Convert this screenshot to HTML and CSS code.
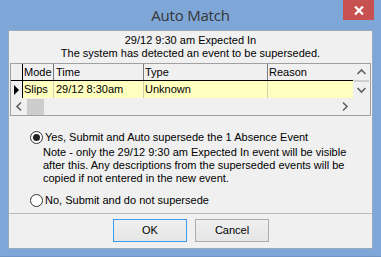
FILE: index.html
```html
<!DOCTYPE html>
<html>
<head>
<meta charset="utf-8">
<link rel="stylesheet" href="styles.css">
</head>
<body>
<div class="window">
  <div class="titlebar">
    <div class="spacer"></div>
    <div class="title">Auto Match</div>
    <div class="tb-right">
      <div class="close">
        <svg width="10" height="9" viewBox="0 0 10 9"><path d="M1 0.5 L9 8.5 M9 0.5 L1 8.5" stroke="#fff" stroke-width="2.2" fill="none"/></svg>
      </div>
    </div>
  </div>
  <div class="client">
    <div class="info">
      <div>29/12 9:30 am Expected In</div>
      <div>The system has detected an event to be superseded.</div>
    </div>
    <div class="grid">
      <div class="grid-top">
        <div class="rows">
          <div class="row head">
            <div class="cell ind"></div>
            <div class="cell c-mode">Mode</div>
            <div class="cell c-time">Time</div>
            <div class="cell c-type">Type</div>
            <div class="cell c-reason">Reason</div>
          </div>
          <div class="row data">
            <div class="cell ind"><svg width="5" height="10" viewBox="0 0 5 10"><path d="M0 0 L5 5 L0 10 Z" fill="#000"/></svg></div>
            <div class="cell c-mode">Slips</div>
            <div class="cell c-time">29/12 8:30am</div>
            <div class="cell c-type">Unknown</div>
            <div class="cell c-reason"></div>
          </div>
        </div>
        <div class="vscroll">
          <svg class="arrow" width="17" height="16" viewBox="0 0 17 16"><path d="M4.5 10 L8.5 6 L12.5 10" stroke="#606060" stroke-width="1.6" fill="none"/></svg>
          <div class="vthumb"></div>
          <svg class="arrow" width="17" height="16" viewBox="0 0 17 16"><path d="M4.5 6 L8.5 10 L12.5 6" stroke="#606060" stroke-width="1.6" fill="none"/></svg>
        </div>
      </div>
      <div class="hscroll-row">
        <div class="hscroll">
          <svg class="harrow" width="16" height="17" viewBox="0 0 16 17"><path d="M10 4.5 L6 8.5 L10 12.5" stroke="#606060" stroke-width="1.6" fill="none"/></svg>
          <div class="hthumb"></div>
          <div class="htrack"></div>
          <svg class="harrow" width="16" height="17" viewBox="0 0 16 17"><path d="M6 4.5 L10 8.5 L6 12.5" stroke="#606060" stroke-width="1.6" fill="none"/></svg>
        </div>
        <div class="corner"></div>
      </div>
    </div>
    <div class="options">
      <div class="radio-row">
        <span class="radio checked"></span>
        <span class="label">Yes, Submit and Auto supersede the 1 Absence Event</span>
      </div>
      <div class="note">Note - only the 29/12 9:30 am Expected In event will be visible<br>after this. Any descriptions from the superseded events will be<br>copied if not entered in the new event.</div>
      <div class="radio-row second">
        <span class="radio"></span>
        <span class="label">No, Submit and do not supersede</span>
      </div>
    </div>
    <div class="sep"></div>
    <div class="buttons">
      <div class="btn default">OK</div>
      <div class="btn">Cancel</div>
    </div>
  </div>
</div>
</body>
</html>
```

FILE: styles.css
```css
html, body {
  margin: 0;
  padding: 0;
}
body {
  width: 381px;
  height: 257px;
  overflow: hidden;
}
.window {
  width: 381px;
  height: 257px;
  box-sizing: border-box;
  background: #7ea6d7;
  border-bottom: 1px solid #6f93c2;
  display: flex;
  flex-direction: column;
}
.titlebar {
  height: 30px;
  display: grid;
  grid-template-columns: 1fr auto 1fr;
  align-items: start;
}
.title {
  font-family: "Open Sans", sans-serif;
  font-size: 15px;
  line-height: 30px;
  color: #363636;
  letter-spacing: -0.2px;
}
.tb-right {
  display: flex;
  justify-content: flex-end;
  padding-right: 7px;
}
.close {
  width: 31px;
  height: 20px;
  background: #c75050;
  display: flex;
  align-items: center;
  justify-content: center;
}
.client {
  margin: 0 8px;
  height: 219px;
  box-sizing: border-box;
  border: 1px solid #98a8bf;
  background: #f0f0f0;
  display: flex;
  flex-direction: column;
  font-family: "Liberation Sans", Arial, sans-serif;
  font-size: 11px;
  color: #000;
}
.info {
  padding-top: 3px;
  text-align: center;
  line-height: 13px;
}
.grid {
  margin: 3px 1px 0 1px;
  border: 1px solid #a0a0a0;
  background: #f0f0f0;
}
.grid-top {
  display: flex;
}
.rows {
  flex: 1;
}
.row {
  display: flex;
  height: 17px;
  box-sizing: border-box;
  line-height: 16px;
}
.row.head {
  border-bottom: 1px solid #000;
}
.cell {
  box-sizing: border-box;
  padding-left: 1px;
  white-space: nowrap;
  overflow: hidden;
}
.head .cell {
  border-right: 1px solid #7a7a7a;
}
.data .cell {
  background: #ffffbf;
  border-right: 1px solid #cfcfb0;
}
.cell.ind {
  width: 12px;
  border-right: 1px solid #000 !important;
  background: #f0f0f0 !important;
  display: flex;
  align-items: center;
  padding-left: 3px;
}
.c-mode { width: 31px; }
.c-time { width: 90px; padding-left: 2px; }
.c-type { width: 124px; }
.c-reason { flex: 1; border-right: none !important; }
.head .c-reason { border-right: none; }
.vscroll {
  width: 17px;
  display: flex;
  flex-direction: column;
  align-items: center;
  background: #f0f0f0;
}
.vscroll .arrow {
  display: block;
}
.vthumb {
  width: 15px;
  height: 2px;
  background: #cdcdcd;
}
.hscroll-row {
  display: flex;
  height: 17px;
}
.hscroll {
  flex: 1;
  display: flex;
  align-items: stretch;
}
.harrow {
  display: block;
  flex: none;
}
.hthumb {
  width: 17px;
  margin: 1px 0 0 0;
  background: #cdcdcd;
}
.htrack {
  flex: 1;
}
.corner {
  width: 17px;
  background: #f0f0f0;
}
.options {
  margin-top: 14px;
  padding-left: 21px;
}
.radio-row {
  display: flex;
  align-items: center;
  height: 14px;
}
.radio-row.second {
  margin-top: 8px;
}
.radio {
  width: 13px;
  height: 13px;
  box-sizing: border-box;
  border: 1px solid #333;
  border-radius: 50%;
  background: #fff;
  display: flex;
  align-items: center;
  justify-content: center;
  margin-right: 2px;
}
.radio.checked::after {
  content: "";
  width: 7px;
  height: 7px;
  border-radius: 50%;
  background: #222;
}
.label {
  line-height: 14px;
}
.note {
  margin-top: 2px;
  padding-left: 13px;
  line-height: 13px;
}
.sep {
  margin-top: 6px;
  height: 1px;
  background: #b9b9b9;
}
.buttons {
  margin-top: 5px;
  display: flex;
  justify-content: center;
  gap: 8px;
  padding-left: 1px;
}
.btn {
  width: 74px;
  height: 23px;
  box-sizing: border-box;
  border: 1px solid #acacac;
  background: linear-gradient(#f0f0f0, #e5e5e5);
  text-align: center;
  line-height: 21px;
}
.btn.default {
  border-color: #3c9bf0;
}
```
